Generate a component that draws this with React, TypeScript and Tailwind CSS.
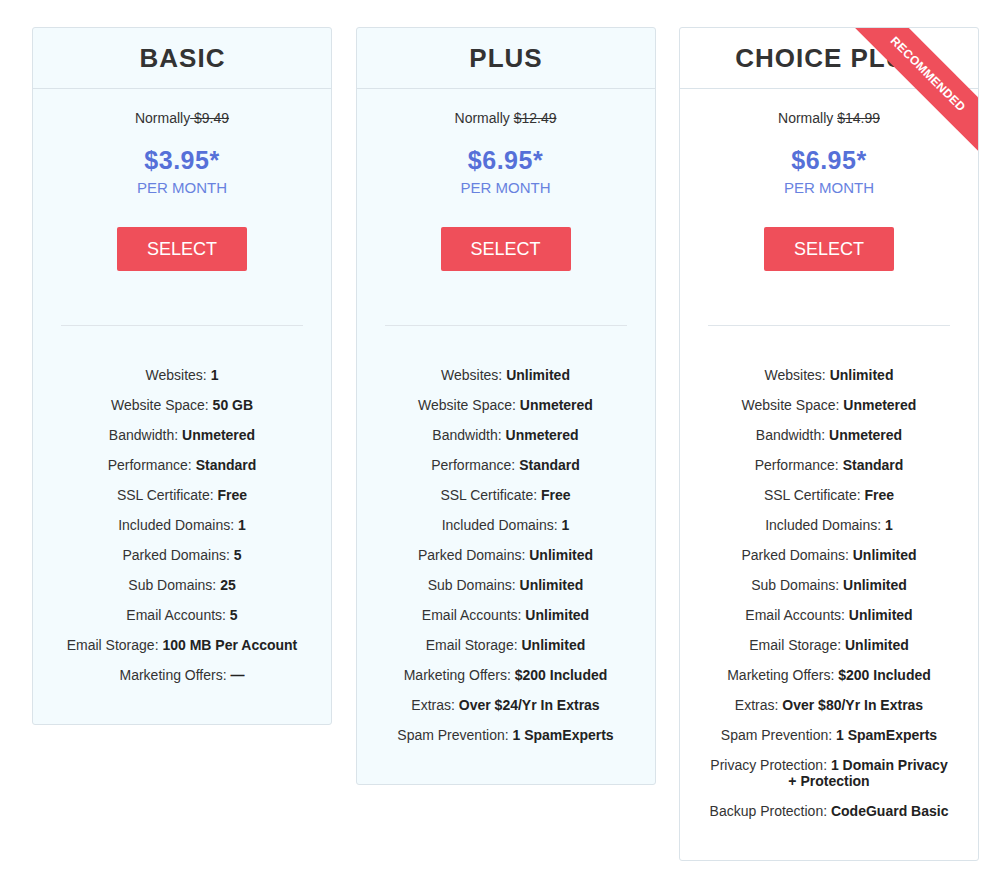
import React from "react";

type Feature = [string, string];

type Plan = {
  name: string;
  normal: string;
  spaceInStrike: boolean;
  price: string;
  bg: string;
  recommended?: boolean;
  features: Feature[];
};

const plans: Plan[] = [
  {
    name: "BASIC",
    normal: "$9.49",
    spaceInStrike: true,
    price: "$3.95",
    bg: "bg-[#f3fbfe]",
    features: [
      ["Websites:", "1"],
      ["Website Space:", "50 GB"],
      ["Bandwidth:", "Unmetered"],
      ["Performance:", "Standard"],
      ["SSL Certificate:", "Free"],
      ["Included Domains:", "1"],
      ["Parked Domains:", "5"],
      ["Sub Domains:", "25"],
      ["Email Accounts:", "5"],
      ["Email Storage:", "100 MB Per Account"],
      ["Marketing Offers:", "\u2014"],
    ],
  },
  {
    name: "PLUS",
    normal: "$12.49",
    spaceInStrike: false,
    price: "$6.95",
    bg: "bg-[#f3fbfe]",
    features: [
      ["Websites:", "Unlimited"],
      ["Website Space:", "Unmetered"],
      ["Bandwidth:", "Unmetered"],
      ["Performance:", "Standard"],
      ["SSL Certificate:", "Free"],
      ["Included Domains:", "1"],
      ["Parked Domains:", "Unlimited"],
      ["Sub Domains:", "Unlimited"],
      ["Email Accounts:", "Unlimited"],
      ["Email Storage:", "Unlimited"],
      ["Marketing Offers:", "$200 Included"],
      ["Extras:", "Over $24/Yr In Extras"],
      ["Spam Prevention:", "1 SpamExperts"],
    ],
  },
  {
    name: "CHOICE PLUS",
    normal: "$14.99",
    spaceInStrike: false,
    price: "$6.95",
    bg: "bg-white",
    recommended: true,
    features: [
      ["Websites:", "Unlimited"],
      ["Website Space:", "Unmetered"],
      ["Bandwidth:", "Unmetered"],
      ["Performance:", "Standard"],
      ["SSL Certificate:", "Free"],
      ["Included Domains:", "1"],
      ["Parked Domains:", "Unlimited"],
      ["Sub Domains:", "Unlimited"],
      ["Email Accounts:", "Unlimited"],
      ["Email Storage:", "Unlimited"],
      ["Marketing Offers:", "$200 Included"],
      ["Extras:", "Over $80/Yr In Extras"],
      ["Spam Prevention:", "1 SpamExperts"],
      ["Privacy Protection:", "1 Domain Privacy + Protection"],
      ["Backup Protection:", "CodeGuard Basic"],
    ],
  },
];

function Card({ plan }: { plan: Plan }) {
  return (
    <div
      className={`relative w-[300px] shrink-0 overflow-hidden rounded-[3px] border border-[#dae3e9] ${plan.bg}`}
    >
      {plan.recommended && (
        <div className="absolute left-[148px] top-[27px] flex h-[38px] w-[200px] rotate-45 items-center justify-center bg-[#ef4f5b] text-[12px] font-bold tracking-[0.3px] text-white">
          RECOMMENDED
        </div>
      )}
      <div className="flex h-[61px] items-center justify-center border-b border-[#dae3e9]">
        <h2 className="pl-[1px] text-[26px] font-bold leading-none tracking-[1px] text-[#333333]">
          {plan.name}
        </h2>
      </div>
      <div className="flex flex-col items-center px-[22px] pb-[41px] pt-[19px]">
        <p className="text-[14px] leading-[20px] text-[#333333]">
          Normally
          {plan.spaceInStrike ? (
            <del> {plan.normal}</del>
          ) : (
            <>
              {" "}
              <del>{plan.normal}</del>
            </>
          )}
        </p>
        <p className="mt-[17px] text-[25px] font-bold leading-[30px] tracking-[0.5px] text-[#5670d8]">
          {plan.price}*
        </p>
        <p className="mt-[3px] text-[15px] leading-[20px] text-[#6882df]">PER MONTH</p>
        <button className="mt-[29px] h-[44px] w-[130px] rounded-[2px] bg-[#ef4f5a] text-[18px] leading-none text-white">
          SELECT
        </button>
        <div className="mt-[54px] h-px w-[242px] bg-[#dfe5ea]" />
        <ul className="mt-[41px] flex w-[244px] flex-col gap-[14px]">
          {plan.features.map(([label, value]) => (
            <li
              key={label}
              className="text-center text-[14px] leading-[16px] text-[#333333]"
            >
              {label} <strong className="font-bold text-[#222222]">{value}</strong>
            </li>
          ))}
        </ul>
      </div>
    </div>
  );
}

export default function App() {
  return (
    <div
      className="min-h-[871px] bg-white pl-[32px] pt-[27px]"
      style={{ fontFamily: '"Liberation Sans", Arial, sans-serif' }}
    >
      <div className="flex items-start gap-[23.5px]">
        {plans.map((p) => (
          <Card key={p.name} plan={p} />
        ))}
      </div>
    </div>
  );
}
